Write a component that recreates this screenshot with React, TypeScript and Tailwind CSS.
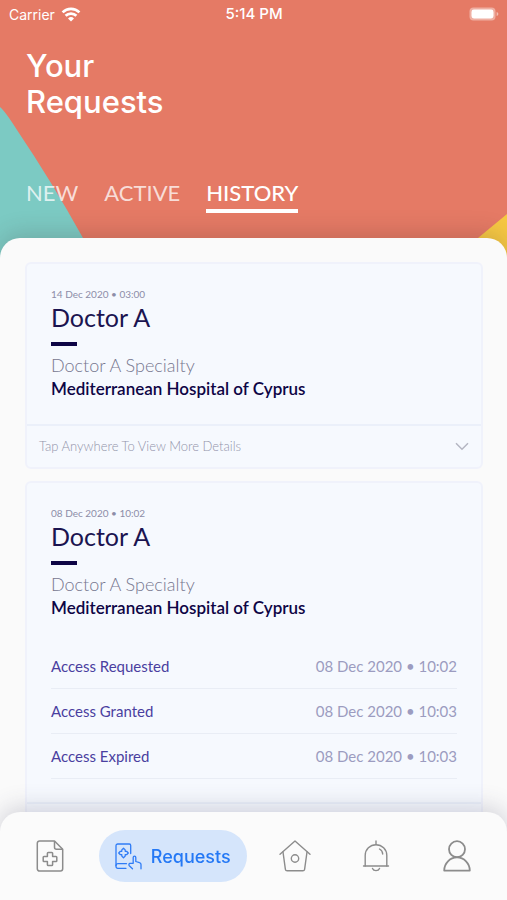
import type { ReactNode } from "react";

type AccessEvent = { label: string; time: string };

type VisitRequest = {
  id: string;
  date: string;
  doctor: string;
  specialty: string;
  hospital: string;
  events: AccessEvent[];
};

const requests: VisitRequest[] = [
  {
    id: "r1",
    date: "14 Dec 2020 • 03:00",
    doctor: "Doctor A",
    specialty: "Doctor A Specialty",
    hospital: "Mediterranean Hospital of Cyprus",
    events: [],
  },
  {
    id: "r2",
    date: "08 Dec 2020 • 10:02",
    doctor: "Doctor A",
    specialty: "Doctor A Specialty",
    hospital: "Mediterranean Hospital of Cyprus",
    events: [
      { label: "Access Requested", time: "08 Dec 2020 • 10:02" },
      { label: "Access Granted", time: "08 Dec 2020 • 10:03" },
      { label: "Access Expired", time: "08 Dec 2020 • 10:03" },
    ],
  },
];

function WifiIcon() {
  return (
    <svg width="20" height="15" viewBox="0 0 20 15" fill="none" stroke="white" strokeWidth="2.7" aria-hidden="true">
      <path d="M1.6 5.4a12 12 0 0 1 16.8 0" />
      <path d="M4.6 8.8a7.6 7.6 0 0 1 10.8 0" />
      <path d="M10 14.5 7 11.400a4.300 4.300 0 0 1 6 0z" fill="white" stroke="none" />
    </svg>
  );
}

function BatteryIcon() {
  return (
    <svg width="30" height="14" viewBox="0 0 30 14" aria-hidden="true">
      <rect x="0.5" y="0.5" width="26" height="13" rx="4" fill="white" fillOpacity="0.4" />
      <rect x="2.5" y="2.5" width="22" height="9" rx="2.4" fill="white" />
      <path d="M27.6 5v4c1-.3 1.7-1 1.7-2s-.7-1.7-1.7-2z" fill="white" fillOpacity="0.5" />
    </svg>
  );
}

function HeaderArt() {
  return (
    <div className="absolute inset-x-0 top-0 h-[270px] overflow-hidden bg-[#e57a65]" aria-hidden="true">
      <svg className="absolute top-0 left-0" width="110" height="270" viewBox="0 0 110 270">
        <path d="M0 107Q5 111 17 130Q52 182 83 238L101 270H0z" fill="#7ccac3" />
      </svg>
      <svg className="absolute top-0 right-0" width="60" height="270" viewBox="0 0 60 270">
        <path d="M60 214 31 238 0 264V270H60z" fill="#f6c843" />
      </svg>
    </div>
  );
}

function FileIcon() {
  return (
    <svg width="28" height="32" viewBox="0 0 28 32" fill="none" stroke="#8c8c8c" strokeWidth="1.5" strokeLinejoin="round" aria-hidden="true">
      <path d="M18.500 1H3.500A2.200 2.200 0 0 0 1.300 3.200V28.800A2.200 2.200 0 0 0 3.500 31H24.500A2.200 2.200 0 0 0 26.700 28.800V9.200z" />
      <path d="M18.500 1V7.200A2 2 0 0 0 20.500 9.200H26.700" />
      <path d="M12.200 12.500h3.600a.8.8 0 0 1 .8.8v3.200h3.400a.8.8 0 0 1 .8.800v3.400a.8.8 0 0 1-.8.800h-3.400v3.200a.8.8 0 0 1-.8.8h-3.600a.8.8 0 0 1-.8-.8v-3.200H8a.8.8 0 0 1-.8-.8v-3.400a.8.8 0 0 1 .8-.8h3.400v-3.200a.8.8 0 0 1 .8-.8z" />
    </svg>
  );
}

function RequestsIcon() {
  return (
    <svg width="27" height="27" viewBox="0 0 27 27" fill="none" stroke="#2f7cf6" strokeWidth="1.3" strokeLinejoin="round" strokeLinecap="round" aria-hidden="true">
      <path d="M11 25.300H2.700A1.700 1.700 0 0 1 1 23.600V2.700A1.700 1.700 0 0 1 2.700 1H14.300A1.400 1.400 0 0 1 15.700 2.400V10.500" />
      <path d="M1 22.500A2 2 0 0 1 3 20.700H11.500" />
      <path d="M8.500 5.200 10.200 6.900V8.300H11.600L13.300 10 11.600 11.700H10.200V13.100L8.500 14.800 6.800 13.100V11.700H5.400L3.700 10 5.400 8.300H6.800V6.900z" />
      <path d="M17.500 25.800 14.300 22.700a1.500 1.500 0 0 1 .5-2.400h3.400V14.500a1.300 1.300 0 0 1 2.600 0V18.500l3.700 1.100a2 2 0 0 1 1.500 2V25.800" />
    </svg>
  );
}

function HomeIcon() {
  return (
    <svg width="32" height="32" viewBox="0 0 32 32" fill="none" stroke="#8c8c8c" strokeWidth="1.4" strokeLinejoin="round" strokeLinecap="round" aria-hidden="true">
      <path d="M1 14.200 16 1 31 14.200" />
      <path d="M4 12 6.400 29.300A1.800 1.800 0 0 0 8.200 30.800H23.800A1.800 1.800 0 0 0 25.600 29.300L28 12" />
      <circle cx="16" cy="18.5" r="3.7" />
    </svg>
  );
}

function BellIcon() {
  return (
    <svg width="28" height="32" viewBox="0 0 28 32" fill="none" stroke="#8c8c8c" strokeWidth="1.4" strokeLinejoin="round" strokeLinecap="round" aria-hidden="true">
      <path d="M14 1V4.500" />
      <path d="M1.500 26H26.500" />
      <path d="M3.200 26V15.500A10.800 10.800 0 0 1 24.800 15.500V26" />
      <path d="M17.500 9A6 6 0 0 1 20.700 14" />
      <path d="M10.500 28.500a3.700 3.200 0 0 0 7 0" />
    </svg>
  );
}

function UserIcon() {
  return (
    <svg width="28" height="32" viewBox="0 0 28 32" fill="none" stroke="#8c8c8c" strokeWidth="1.8" strokeLinejoin="round" aria-hidden="true">
      <circle cx="14" cy="9.2" r="8" />
      <path d="M1.200 30.600A12.800 13.200 0 0 1 26.800 30.600z" />
    </svg>
  );
}

function Tab({ children, active = false }: { children: ReactNode; active?: boolean }) {
  return (
    <button
      type="button"
      role="tab"
      aria-selected={active}
      className={
        active
          ? "border-b-4 border-white pb-px text-[22px] leading-[30px] font-medium text-white"
          : "border-b-4 border-transparent pb-px text-[22px] leading-[30px] text-white/75"
      }
    >
      {children}
    </button>
  );
}

function RequestCard({ request }: { request: VisitRequest }) {
  return (
    <article className="rounded-md border-2 border-[#f0f2fb] bg-[#f6f9fe]">
      <div className="px-6 pt-6 pb-[23px]">
        <p className="text-[10px] leading-3 text-[#8d8da8]">{request.date}</p>
        <h2 className="text-[25px] leading-[34px] text-[#1b1450]">{request.doctor}</h2>
        <div className="mt-2 h-1 w-[26px] bg-[#0e0545]" />
        <p className="mt-[7px] text-[18px] leading-6 font-light text-[#77778f]">{request.specialty}</p>
        <p className="text-[17px] leading-6 font-semibold text-[#0e0545]">{request.hospital}</p>
        {request.events.length > 0 && (
          <dl className="mt-6">
            {request.events.map((event) => (
              <div key={event.label} className="flex h-[45px] items-center justify-between border-b border-[#e9edf5]">
                <dt className="text-[15px] text-[#4a3fa0]">{event.label}</dt>
                <dd className="text-[15px] text-[#9c9cc0]">{event.time}</dd>
              </div>
            ))}
          </dl>
        )}
      </div>
      <button type="button" className="flex h-[43px] w-full items-center justify-between border-t-2 border-[#ebf0fa] px-3">
        <span className="text-[13px] font-light text-[#9294aa]">Tap Anywhere To View More Details</span>
        <svg width="14" height="9" viewBox="0 0 14 9" fill="none" stroke="#b4b6c2" strokeWidth="1.5" aria-hidden="true">
          <path d="M1 1.200 7 7.200 13 1.200" />
        </svg>
      </button>
    </article>
  );
}

function NavButton({ label, children }: { label: string; children: ReactNode }) {
  return (
    <button type="button" aria-label={label} className="flex h-[52px] w-8 items-center justify-center">
      {children}
    </button>
  );
}

export default function App() {
  return (
    <div className="relative h-screen overflow-hidden bg-[#fafafa] font-['Lato',sans-serif]">
      <HeaderArt />
      <div className="relative">
        <div className="grid h-7 grid-cols-3 items-center pr-2 pl-[9px] font-['Inter',sans-serif] text-white">
          <div className="flex items-center gap-1.5 text-[14px]">
            <span>Carrier</span>
            <WifiIcon />
          </div>
          <span className="text-center text-[15px] font-medium">5:14 PM</span>
          <div className="flex justify-end">
            <BatteryIcon />
          </div>
        </div>
        <header className="h-[210px] px-[26px] pt-5 text-white">
          <h1 className="font-['Inter',sans-serif] text-[31px] leading-9 font-medium">
            Your
            <br />
            Requests
          </h1>
          <div role="tablist" className="mt-[58px] flex gap-[26px]">
            <Tab>NEW</Tab>
            <Tab>ACTIVE</Tab>
            <Tab active>HISTORY</Tab>
          </div>
        </header>
        <main className="flex min-h-screen flex-col gap-3 rounded-t-[20px] bg-[#fafafa] pt-6 pr-6 pb-28 pl-[25px] shadow-[0_-4px_24px_rgba(60,40,40,0.2)]">
          {requests.map((request) => (
            <RequestCard key={request.id} request={request} />
          ))}
        </main>
      </div>
      <nav className="fixed inset-x-0 bottom-0 flex h-[88px] items-center justify-between rounded-t-[20px] bg-[#fbfbfb] px-[34px] shadow-[0_-4px_24px_rgba(60,60,90,0.22)]">
        <NavButton label="Records">
          <FileIcon />
        </NavButton>
        <button
          type="button"
          aria-current="page"
          className="-mx-4 flex h-[52px] items-center gap-[9px] rounded-full bg-[#d5e5fb] px-4 font-['Inter',sans-serif] text-[18px] font-medium text-[#2478f5]"
        >
          <RequestsIcon />
          Requests
        </button>
        <NavButton label="Home">
          <HomeIcon />
        </NavButton>
        <NavButton label="Notifications">
          <BellIcon />
        </NavButton>
        <NavButton label="Profile">
          <UserIcon />
        </NavButton>
      </nav>
    </div>
  );
}
